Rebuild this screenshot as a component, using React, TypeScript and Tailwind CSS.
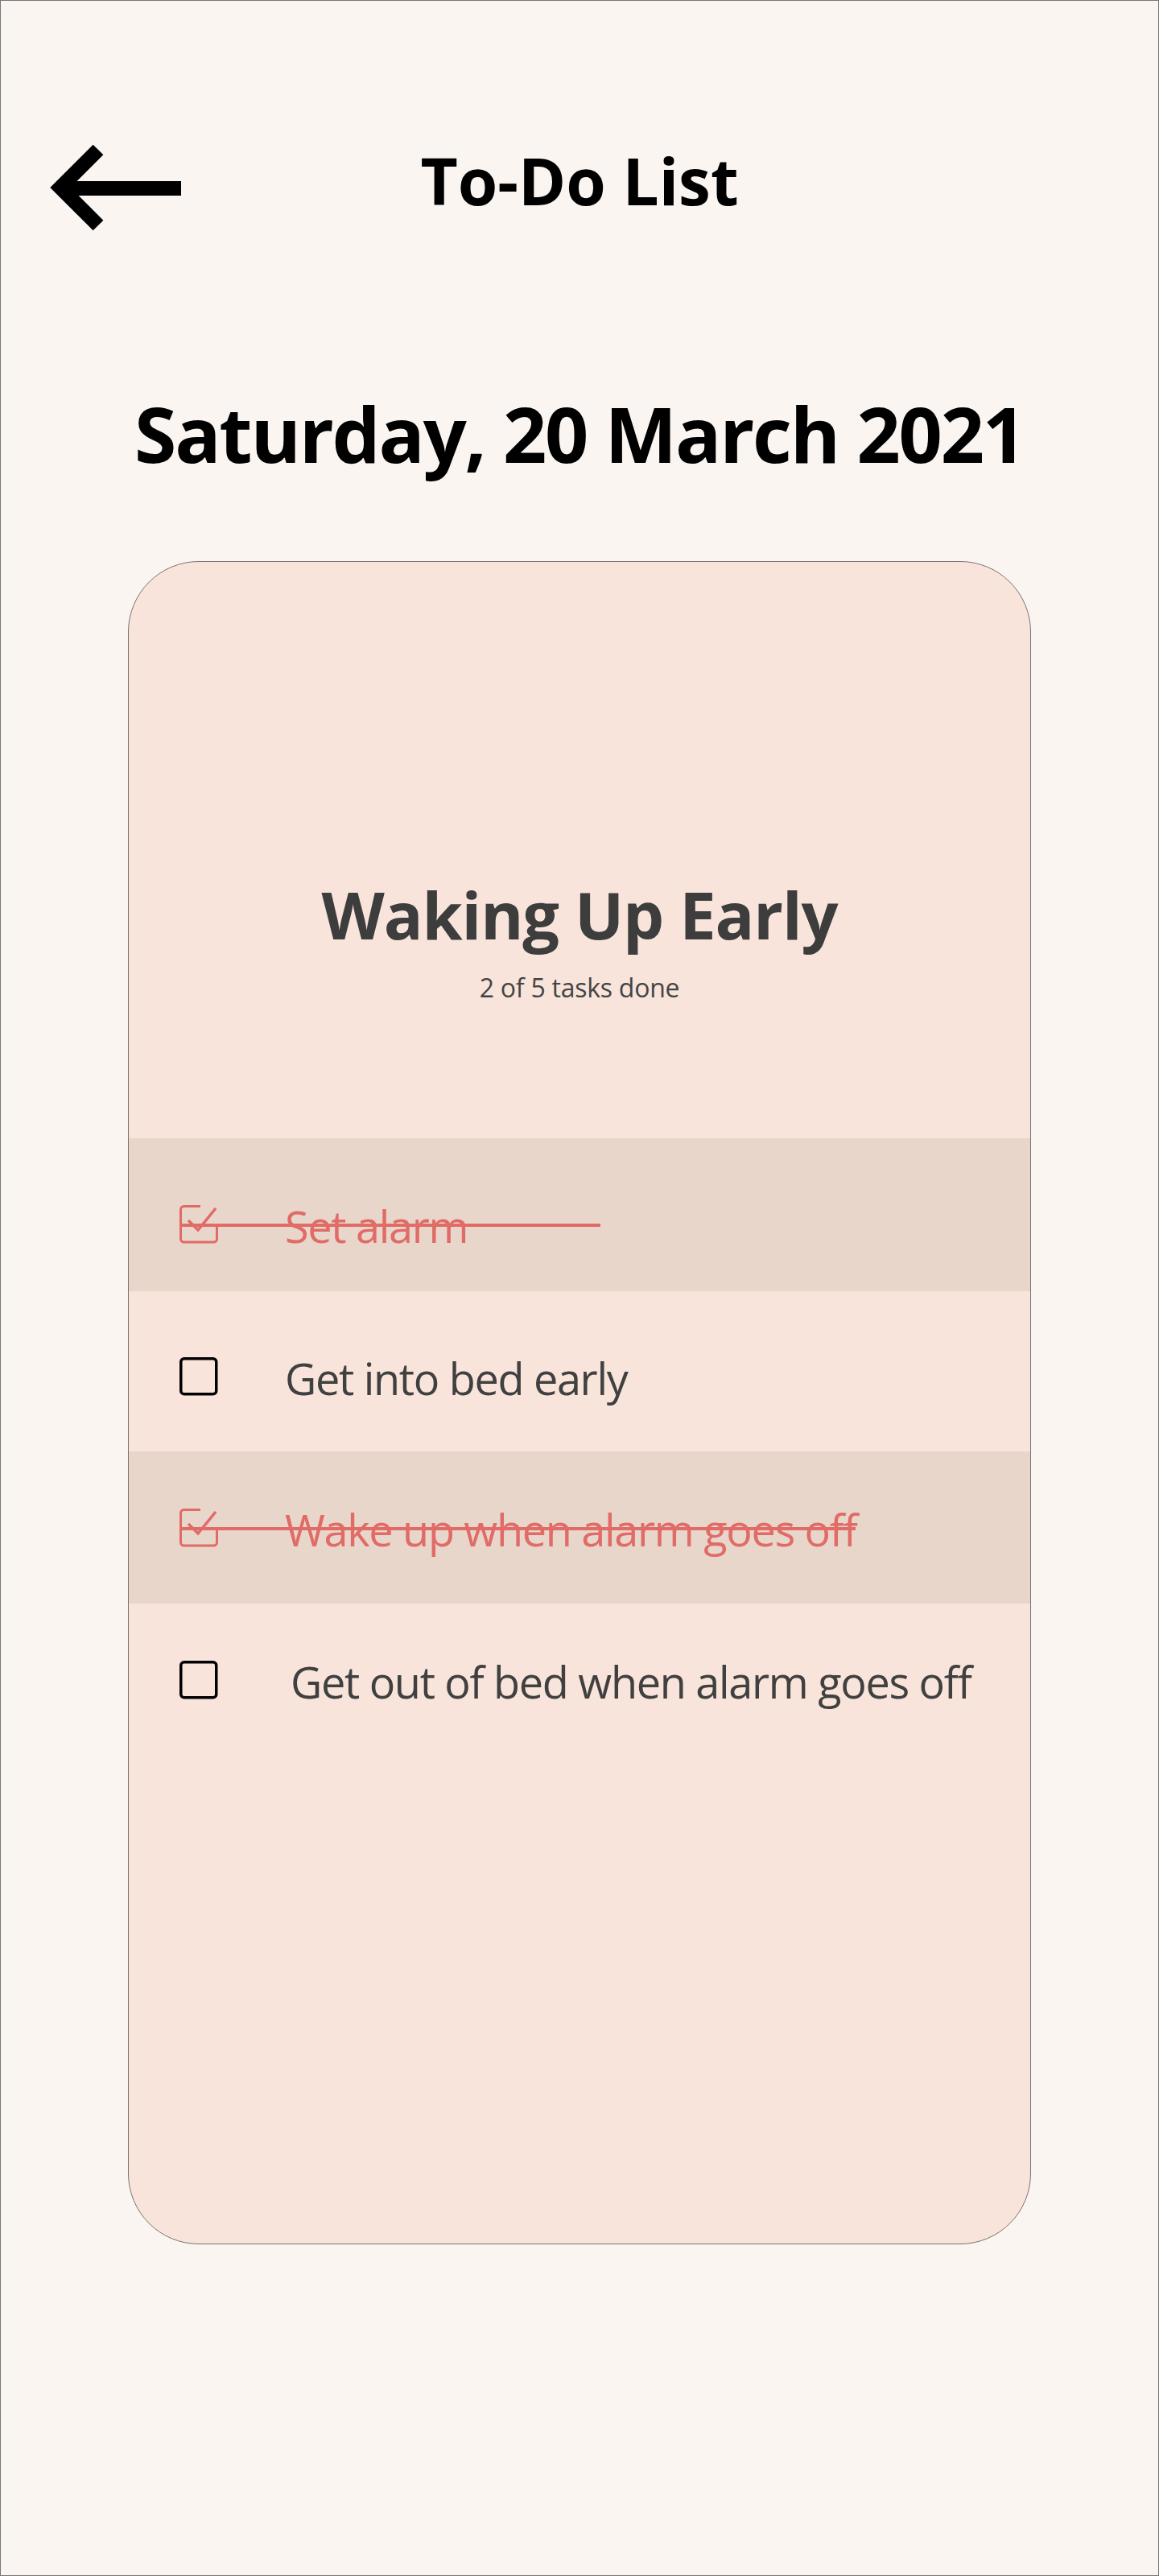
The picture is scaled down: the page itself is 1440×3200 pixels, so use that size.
import React from "react";

interface Task {
  label: string;
  done: boolean;
  rowClass: string;
  textClass: string;
  strikeClass?: string;
}

const tasks: Task[] = [
  { label: "Set alarm", done: true, rowClass: "h-[190px] pt-[83px]", textClass: "ml-[83px]", strikeClass: "w-[523px]" },
  { label: "Get into bed early", done: false, rowClass: "h-[199px] pt-[82px]", textClass: "ml-[83px]" },
  { label: "Wake up when alarm goes off", done: true, rowClass: "h-[189px] pt-[71px]", textClass: "ml-[83px]", strikeClass: "w-[840px]" },
  { label: "Get out of bed when alarm goes off", done: false, rowClass: "h-[189px] pt-[71px]", textClass: "ml-[90px]" },
];

const BackArrow = () => (
  <svg width="168" height="116" viewBox="60 176 168 116" fill="none">
    <polyline points="122,186 75,233 122,280" stroke="#000" strokeWidth="18" strokeLinejoin="miter" />
    <line x1="75" y1="234" x2="225" y2="234" stroke="#000" strokeWidth="18" />
  </svg>
);

const CheckedBox = () => (
  <svg width="48" height="48" viewBox="0 0 48 48" fill="none" className="shrink-0">
    <path
      d="M26 1.5H5.5a4 4 0 0 0-4 4V42a4 4 0 0 0 4 4H42.5a4 4 0 0 0 4-4V23"
      stroke="#E06B67"
      strokeWidth="3"
    />
    <path d="M11 19L23 31L45 4" stroke="#E06B67" strokeWidth="3.5" />
  </svg>
);

const EmptyBox = () => (
  <svg width="48" height="48" viewBox="0 0 48 48" fill="none" className="shrink-0">
    <rect x="1.75" y="1.75" width="44" height="44" rx="4" stroke="#000" strokeWidth="3.5" />
  </svg>
);

const TaskRow = ({ task }: { task: Task }) => (
  <div className={`${task.rowClass} ${task.done ? "bg-[#E9D6CB]" : ""} pl-[63px]`}>
    <div className="relative flex items-start">
      {task.done ? <CheckedBox /> : <EmptyBox />}
      <span
        className={`${task.textClass} -mt-[1px] text-[54px] leading-none tracking-[-1.3px] whitespace-nowrap ${
          task.done ? "text-[#E06B67]" : "text-[#404040]"
        }`}
      >
        {task.label}
      </span>
      {task.done && (
        <div className={`absolute left-0 top-[23px] h-[4px] bg-[#E06B67] ${task.strikeClass}`} />
      )}
    </div>
  </div>
);

export default function App() {
  return (
    <div className="w-[1440px] h-[3200px] border border-[#777] bg-[#FAF5F1] font-['Open_Sans',sans-serif] flex flex-col">
      <div className="grid grid-cols-[1fr_auto_1fr] pt-[175px]">
        <div className="ml-[59px]">
          <BackArrow />
        </div>
        <h1 className="mt-[8px] text-[80px] leading-none font-bold text-black">To-Do List</h1>
        <div />
      </div>

      <h2 className="mt-[199px] text-center text-[95px] leading-none font-bold tracking-[-2.2px] text-black">
        Saturday, 20 March 2021
      </h2>

      <div className="mt-[111px] mx-auto w-[1122px] h-[2091px] border border-[#7a7370] rounded-[88px] bg-[#F8E4DA] overflow-hidden flex flex-col">
        <div className="h-[716px] shrink-0 pt-[397px] flex flex-col items-center">
          <h3 className="text-[81px] leading-none font-bold tracking-[-1.1px] text-[#3D3D3D]">Waking Up Early</h3>
          <p className="mt-[35px] text-[32px] leading-none tracking-[-0.25px] text-[#444]">2 of 5 tasks done</p>
        </div>
        {tasks.map((t) => (
          <TaskRow key={t.label} task={t} />
        ))}
      </div>
    </div>
  );
}
